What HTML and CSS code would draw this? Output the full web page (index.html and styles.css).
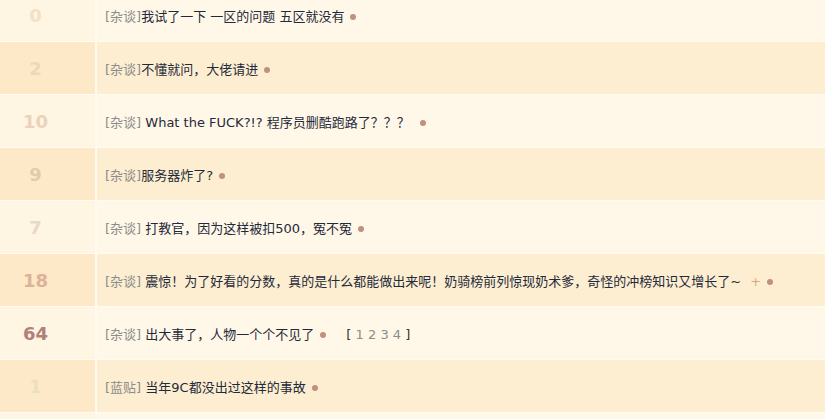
FILE: index.html
```html
<!DOCTYPE html>
<html lang="zh-CN">
<head>
<meta charset="utf-8">
<title>topics</title>
<link rel="stylesheet" href="styles.css">
</head>
<body>
<div class="list">
  <div class="row odd">
    <div class="c1"><span class="n n0">0</span></div>
    <div class="c2"><span class="line"><span class="cat">[杂谈]</span><span class="t">我试了一下 一区的问题 五区就没有</span><span class="dot"></span></span></div>
  </div>
  <div class="row even">
    <div class="c1"><span class="n n2">2</span></div>
    <div class="c2"><span class="line"><span class="cat">[杂谈]</span><span class="t">不懂就问，大佬请进</span><span class="dot"></span></span></div>
  </div>
  <div class="row odd">
    <div class="c1"><span class="n n10">10</span></div>
    <div class="c2"><span class="line"><span class="cat">[杂谈]</span> <span class="t">What the FUCK?!? 程序员删酷跑路了？？？</span><span class="dot wide"></span></span></div>
  </div>
  <div class="row even">
    <div class="c1"><span class="n n9">9</span></div>
    <div class="c2"><span class="line"><span class="cat">[杂谈]</span><span class="t">服务器炸了?</span><span class="dot"></span></span></div>
  </div>
  <div class="row odd">
    <div class="c1"><span class="n n7">7</span></div>
    <div class="c2"><span class="line"><span class="cat">[杂谈]</span> <span class="t">打教官，因为这样被扣500，冤不冤</span><span class="dot"></span></span></div>
  </div>
  <div class="row even">
    <div class="c1"><span class="n n18">18</span></div>
    <div class="c2"><span class="line"><span class="cat">[杂谈]</span> <span class="t">震惊！为了好看的分数，真的是什么都能做出来呢！奶骑榜前列惊现奶术爹，奇怪的冲榜知识又增长了~</span><span class="plus">+</span><span class="dot"></span></span></div>
  </div>
  <div class="row odd">
    <div class="c1"><span class="n n64">64</span></div>
    <div class="c2"><span class="line"><span class="cat">[杂谈]</span> <span class="t">出大事了，人物一个个不见了</span><span class="dot"></span><span class="pages">[ <span class="pg">1</span> <span class="pg">2</span> <span class="pg">3</span> <span class="pg">4</span> ]</span></span></div>
  </div>
  <div class="row even">
    <div class="c1"><span class="n n1">1</span></div>
    <div class="c2"><span class="line"><span class="cat">[蓝贴]</span> <span class="t">当年9C都没出过这样的事故</span><span class="dot"></span></span></div>
  </div>
  <div class="row odd">
    <div class="c1"></div>
    <div class="c2"></div>
  </div>
</div>
</body>
</html>
```
FILE: styles.css
```css
html, body {
  margin: 0;
  padding: 0;
  background: #fff8e8;
  overflow: hidden;
}
.list {
  margin-top: -11px;
  font-family: "DejaVu Sans", "Noto Sans CJK SC", sans-serif;
  font-size: 13px;
}
.row {
  display: flex;
  height: 53px;
  box-sizing: border-box;
  border-bottom: 1px solid #fffbf1;
}
.odd { background: #fff8e8; }
.even { background: #fdeed1; }
.c1 {
  width: 97px;
  flex: none;
  box-sizing: border-box;
  padding-right: 24px;
  display: flex;
  align-items: center;
  justify-content: center;
  border-right: 2px solid #fffaf0;
}
.odd .c1 { background: #fff5e3; }
.even .c1 { background: #fde9c7; }
.n {
  font-family: "DejaVu Sans", sans-serif;
  font-weight: bold;
  font-size: 18px;
}
.n0 { color: #f2e1c6; }
.n2 { color: #eed7b8; }
.n10 { color: #e9d3bb; }
.n9 { color: #e4caa7; }
.n7 { color: #ead8c8; }
.n18 { color: #dcb29b; }
.n64 { color: #b0807a; }
.n1 { color: #ecdfc1; }
.c2 {
  flex: 1;
  padding-left: 8px;
  display: flex;
  align-items: center;
  color: #1f2a3a;
}
.line {
  white-space: pre;
}
.cat { color: #8c8c8c; }
.t { color: #1f2a3a; }
.dot {
  display: inline-block;
  width: 6px;
  height: 6px;
  border-radius: 50%;
  background: #c09080;
  margin-left: 6px;
  vertical-align: 1px;
}
.dot.wide { margin-left: 10px; }
.plus {
  color: #d9a882;
  margin-left: 9px;
}
.pages {
  margin-left: 20px;
  color: #333;
}
.pg { color: #8c8c8c; }
```
